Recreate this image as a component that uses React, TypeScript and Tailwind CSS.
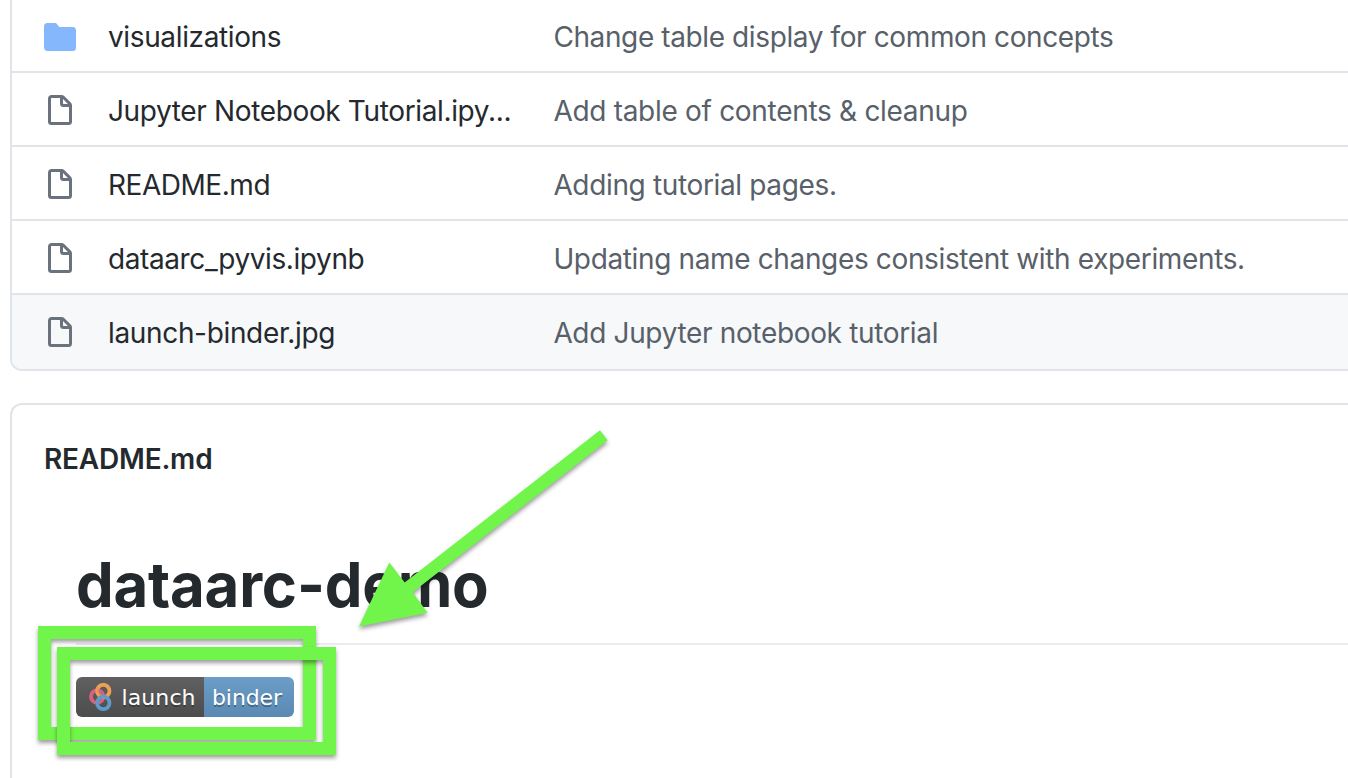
type FileRow = {
  name: string;
  message: string;
  folder?: boolean;
  nameClass: string;
  messageClass: string;
};

const rows: FileRow[] = [
  {
    name: 'visualizations',
    message: 'Change table display for common concepts',
    folder: true,
    nameClass: 'tracking-[-0.37px]',
    messageClass: 'tracking-[-0.39px]',
  },
  {
    name: 'Jupyter Notebook Tutorial.ipy...',
    message: 'Add table of contents & cleanup',
    nameClass: 'tracking-[-0.36px]',
    messageClass: 'tracking-[-0.3px]',
  },
  {
    name: 'README.md',
    message: 'Adding tutorial pages.',
    nameClass: 'tracking-[-0.46px]',
    messageClass: 'tracking-[-0.35px]',
  },
  {
    name: 'dataarc_pyvis.ipynb',
    message: 'Updating name changes consistent with experiments.',
    nameClass: 'tracking-[-0.4px]',
    messageClass: 'tracking-[-0.36px]',
  },
  {
    name: 'launch-binder.jpg',
    message: 'Add Jupyter notebook tutorial',
    nameClass: 'tracking-[-0.34px]',
    messageClass: 'tracking-[-0.34px]',
  },
];

function FolderIcon() {
  return (
    <svg className="size-8 shrink-0 fill-[#84b7fb]" viewBox="0 0 16 16">
      <path d="M1.75 1A1.75 1.75 0 000 2.75v10.5C0 14.216.784 15 1.75 15h12.5A1.75 1.75 0 0016 13.25v-8.5A1.75 1.75 0 0014.25 3h-6.5a.25.25 0 01-.2-.1l-.9-1.2c-.33-.44-.85-.7-1.4-.7h-3.5z" />
    </svg>
  );
}

function FileIcon() {
  return (
    <svg className="size-8 shrink-0 fill-[#6a737d]" viewBox="0 0 16 16">
      <path
        fillRule="evenodd"
        d="M3.75 1.5a.25.25 0 00-.25.25v11.5c0 .138.112.25.25.25h8.5a.25.25 0 00.25-.25V6H9.75A1.75 1.75 0 018 4.25V1.5H3.75zm5.75.56v2.19c0 .138.112.25.25.25h2.19L9.5 2.06zM2 1.75C2 .784 2.784 0 3.75 0h5.086c.464 0 .909.184 1.237.513l3.414 3.414c.329.328.513.773.513 1.237v8.086A1.75 1.75 0 0112.25 15h-8.5A1.75 1.75 0 012 13.25V1.75z"
      />
    </svg>
  );
}

function BinderLogo() {
  return (
    <svg className="h-7 w-6 shrink-0" viewBox="0 0 24 28" fill="none" strokeWidth="3.8">
      <circle cx="9.2" cy="13.6" r="6.2" stroke="#d9617e" />
      <circle cx="15.3" cy="8" r="6.2" stroke="#eca055" />
      <path d="M9.2 7.4A6.2 6.2 0 0 1 15 11.4" stroke="#d9617e" strokeOpacity="0.35" />
      <circle cx="15.3" cy="19.9" r="6.2" stroke="#5e9bcb" />
    </svg>
  );
}

function BinderBadge() {
  return (
    <div className="flex h-10 w-[218px] overflow-hidden rounded-md font-['DejaVu_Sans',sans-serif] text-[22px] leading-[40px] text-white [text-shadow:0_2px_0_rgba(1,1,1,0.3)]">
      <div className="flex w-32 shrink-0 items-center bg-linear-to-b from-[#606060] to-[#4c4c4c] pl-3">
        <BinderLogo />
        <span className="ml-[9.5px] pt-px tracking-[0.1px]">launch</span>
      </div>
      <div className="w-[90px] bg-linear-to-b from-[#6c9dc7] to-[#5a8ab3] pt-px pl-2">
        <span className="tracking-[-0.1px]">binder</span>
      </div>
    </div>
  );
}

function Annotations() {
  return (
    <svg className="pointer-events-none absolute inset-0 h-[778px] w-[1348px]" viewBox="0 0 1348 778">
      <g fill="none" stroke="#72f54a" strokeWidth="13">
        <rect className="[filter:drop-shadow(0_3px_2px_rgba(0,0,0,0.38))]" x="44.5" y="632.5" width="265" height="101" />
        <rect className="[filter:drop-shadow(0_3px_2px_rgba(0,0,0,0.38))]" x="63.5" y="653.5" width="266" height="95" />
      </g>
      <path
        className="[filter:drop-shadow(0_3px_2px_rgba(0,0,0,0.38))]"
        fill="#72f54a"
        d="M359 626.5L389.3 562.5L404.7 582.5L600 430.3L607.7 440.3L412.7 592.3L427.5 612.7Z"
      />
    </svg>
  );
}

export default function App() {
  return (
    <div className="relative h-[778px] w-[1348px] overflow-hidden bg-white font-['Inter',sans-serif] text-[28px] text-[#24292e]">
      <div className="flex h-full flex-col pl-[10px]">
        <div className="h-[371px] shrink-0 overflow-hidden rounded-bl-xl border-b-2 border-l-2 border-[#e1e4e8]">
          {rows.map((row) => (
            <div
              key={row.name}
              className="flex h-[74px] items-center border-t-2 border-[#e1e4e8] pt-[3px] pl-8 leading-[40px] whitespace-nowrap first:h-[71px] first:border-t-0 first:pt-[3px] last:h-[76px] last:bg-[#f6f8fa] last:pt-[1px]"
            >
              {row.folder ? <FolderIcon /> : <FileIcon />}
              <div className="ml-8 w-[445.4px] shrink-0">
                <span className={row.nameClass}>{row.name}</span>
              </div>
              <span className={`text-[#586069] ${row.messageClass}`}>{row.message}</span>
            </div>
          ))}
        </div>
        <div className="mt-8 flex-1 rounded-tl-xl border-t-2 border-l-2 border-[#e1e4e8] pt-[34px] pl-8">
          <h2 className="leading-[40px] font-semibold">
            <span className="tracking-[-0.2px]">README.md</span>
          </h2>
          <div className="pt-[66px] pl-8">
            <h1 className="h-[100px] border-b-2 border-[#eaecef] text-[62px] leading-[79px] font-bold">
              <span className="inline-block origin-left scale-x-[0.965] tracking-[-0.2px]">dataarc-demo</span>
            </h1>
            <div className="pt-8">
              <BinderBadge />
            </div>
          </div>
        </div>
      </div>
      <Annotations />
    </div>
  );
}
